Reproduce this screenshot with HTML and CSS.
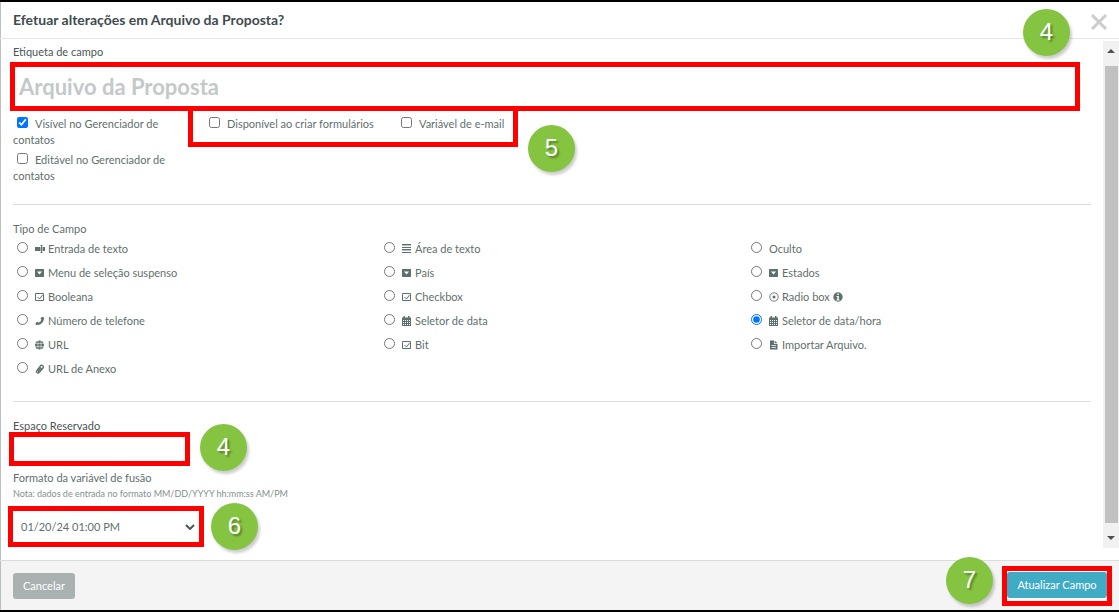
FILE: index.html
```html
<!DOCTYPE html>
<html lang="pt-BR">
<head>
<meta charset="utf-8">
<title>Efetuar alterações</title>
<link rel="stylesheet" href="styles.css">
</head>
<body>
<svg class="sprite" aria-hidden="true">
  <symbol id="i-input" viewBox="0 0 10 10"><path d="M0 3h5v4H0zM6 3h1v4H6zM8 3h2v4H8zM6 1h1v8H6z"/><path d="M5 1h3v1H5zM5 8h3v1H5zM5 3h5v4H5z" opacity=".5"/></symbol>
  <symbol id="i-lines" viewBox="0 0 10 10"><path d="M0 0h9v1H0zM0 3h9v1H0zM0 5h9v1H0zM0 8h9v1H0z"/><path d="M0 1h9v1H0zM0 6h9v1H0z" opacity=".45"/></symbol>
  <symbol id="i-drop" viewBox="0 0 10 10"><path fill-rule="evenodd" d="M.5 1h8l.5.5v7l-.5.5h-8L0 8.500v-7zM2 3.500L4.500 6.500l2.500-3z"/></symbol>
  <symbol id="i-check" viewBox="0 0 10 10"><path d="M.5 1.500h8v7h-8zM2.500 5l2 2L7.500 3" fill="none" stroke="currentColor"/></symbol>
  <symbol id="i-cal" viewBox="0 0 10 10"><path fill-rule="evenodd" d="M1.500 0H3v1.500h3V0h1.500v1.500H9V10H0V1.500h1.500zM1 4v1h1V4zm2 0v1h1V4zM5 4v1h1V4zm2 0v1h1V4zM1 6v1h1V6zm2 0v1h1V6zM5 6v1h1V6zm2 0v1h1V6zM1 8v1h1V8zm2 0v1h1V8zM5 8v1h1V8zm2 0v1h1V8z"/></symbol>
  <symbol id="i-radio" viewBox="0 0 10 10"><circle cx="5" cy="5" r="4.200" fill="none" stroke="currentColor" stroke-width=".9"/><circle cx="5" cy="5" r="1.500"/></symbol>
  <symbol id="i-info" viewBox="0 0 10 10"><path fill-rule="evenodd" d="M5 .3a4.700 4.700 0 1 1 0 9.400A4.700 4.700 0 0 1 5 .3zM4.300 1.500V3h1.500V1.500zM3.500 4v1h.8v2.500h-.8v1h3v-1h-.7V4z"/></symbol>
  <symbol id="i-phone" viewBox="0 0 10 10"><path d="M7 .8l2 .7C9.300 5.500 6 9.500 1 9L.5 7l2-1.300 1.200 1C5.300 6 6 5 6.300 3.500l-.9-1z"/></symbol>
  <symbol id="i-globe" viewBox="0 0 10 10"><circle cx="4.500" cy="5" r="4.500"/><path d="M0 3.500h9M0 6.500h9M3 0v10M6 0v10" stroke="#fff" stroke-width=".5"/></symbol>
  <symbol id="i-clip" viewBox="0 0 10 10"><path d="M7.500 4L4.500 8C3 10 .5 8.500 1.800 6.500L5 2.300C6.500.2 9.300 1.800 8 4L5 7.500C4 8.500 2.800 7.500 3.600 6.500L6 3.500" fill="none" stroke="currentColor" stroke-width="1.300"/></symbol>
  <symbol id="i-file" viewBox="0 0 10 10"><path fill-rule="evenodd" d="M1 .5h4V4h3.500v5.500H1zM2.500 5v.7H7V5zm0 2v.7H7V7z"/><path d="M5.700.5l2.800 2.800H5.700z"/></symbol>
</svg>
<div class="dialog" role="dialog" aria-labelledby="title">
  <header class="header">
    <h1 id="title">Efetuar alterações em Arquivo da Proposta?</h1>
    <button class="close" type="button" aria-label="Fechar"><svg viewBox="0 0 18 18"><path d="M2 2l14 14M16 2L2 16"/></svg></button>
    <span class="step step-close">4</span>
  </header>
  <div class="body">
    <main class="content">
      <label class="caption" for="name">Etiqueta de campo</label>
      <div class="highlight name-box"><input id="name" type="text" value="Arquivo da Proposta"></div>
      <div class="flags">
        <div class="flag-col">
          <label><input type="checkbox" checked>Visível no Gerenciador de contatos</label>
          <label><input type="checkbox">Editável no Gerenciador de contatos</label>
        </div>
        <div class="highlight flag-box">
          <label><input type="checkbox">Disponível ao criar formulários</label>
          <label><input type="checkbox">Variável de e-mail</label>
          <span class="step step-flags">5</span>
        </div>
      </div>
      <hr>
      <fieldset>
        <legend>Tipo de Campo</legend>
        <div class="types">
          <label><input type="radio" name="type"><svg><use href="#i-input"/></svg>Entrada de texto</label>
          <label><input type="radio" name="type"><svg><use href="#i-lines"/></svg>Área de texto</label>
          <label><input type="radio" name="type">Oculto</label>
          <label><input type="radio" name="type"><svg><use href="#i-drop"/></svg>Menu de seleção suspenso</label>
          <label><input type="radio" name="type"><svg><use href="#i-drop"/></svg>País</label>
          <label><input type="radio" name="type"><svg><use href="#i-drop"/></svg>Estados</label>
          <label><input type="radio" name="type"><svg><use href="#i-check"/></svg>Booleana</label>
          <label><input type="radio" name="type"><svg><use href="#i-check"/></svg>Checkbox</label>
          <label><input type="radio" name="type"><svg><use href="#i-radio"/></svg>Radio box<svg class="info"><use href="#i-info"/></svg></label>
          <label><input type="radio" name="type"><svg><use href="#i-phone"/></svg>Número de telefone</label>
          <label><input type="radio" name="type"><svg><use href="#i-cal"/></svg>Seletor de data</label>
          <label><input type="radio" name="type" checked><svg><use href="#i-cal"/></svg>Seletor de data/hora</label>
          <label><input type="radio" name="type"><svg><use href="#i-globe"/></svg>URL</label>
          <label><input type="radio" name="type"><svg><use href="#i-check"/></svg>Bit</label>
          <label><input type="radio" name="type"><svg><use href="#i-file"/></svg>Importar Arquivo.</label>
          <label><input type="radio" name="type"><svg><use href="#i-clip"/></svg>URL de Anexo</label>
        </div>
      </fieldset>
      <hr>
      <label class="caption" for="placeholder">Espaço Reservado</label>
      <div class="highlight placeholder-box"><input id="placeholder" type="text"><span class="step step-placeholder">4</span></div>
      <label class="caption muted" for="format">Formato da variável de fusão</label>
      <p class="note">Nota: dados de entrada no formato MM/DD/YYYY hh:mm:ss AM/PM</p>
      <div class="highlight format-box">
        <select id="format"><option>01/20/24 01:00 PM</option></select>
        <svg class="chevron" viewBox="0 0 10 6"><path d="M1 1l4 4 4-4"/></svg>
        <span class="step step-format">6</span>
      </div>
    </main>
    <div class="scrollbar" aria-hidden="true">
      <svg viewBox="0 0 8 4"><path d="M0 4l4-4 4 4z"/></svg>
      <div class="thumb"></div>
      <svg viewBox="0 0 8 4"><path d="M0 0l4 4 4-4z"/></svg>
    </div>
  </div>
  <footer class="footer">
    <button class="btn" type="button">Cancelar</button>
    <div class="highlight submit-box"><button class="btn primary" type="button">Atualizar Campo</button><span class="step step-submit">7</span></div>
  </footer>
</div>
</body>
</html>
```

FILE: styles.css
```css
* { box-sizing: border-box; }

body {
  margin: 0;
  background: #fff;
  color: #5f6f6d;
  font: 11px/16px Lato, sans-serif;
}

input, select, button { font: inherit; color: inherit; }

.sprite { position: absolute; width: 0; height: 0; }

.dialog {
  display: flex;
  flex-direction: column;
  min-height: 100vh;
  border: solid #000;
  border-width: 2px 0;
  box-shadow: inset 1px 0 #b9c0bf;
}

.header {
  position: relative;
  display: flex;
  align-items: center;
  justify-content: space-between;
  height: 37px;
  padding: 0 10px 0 13px;
  border-bottom: 1px solid #e6e8e8;
}

h1 { margin: 0; color: #404b4f; font-size: 14px; font-weight: 700; }

.close { width: 20px; height: 20px; margin-top: 4px; padding: 1px; border: 0; background: none; }
.close svg { display: block; width: 18px; height: 18px; }
.close path { fill: none; stroke: #ccc; stroke-width: 3; }

.body { display: flex; flex: 1; }
.content { flex: 1; padding: 5px 12px 13px 13px; }

.caption { display: block; color: #4b5655; }
.muted { color: #5f6f6d; }

.highlight { position: relative; border: 5px solid #f00; background: #fff; }
.highlight > input, .highlight > select {
  display: block;
  width: 100%;
  height: 100%;
  border: 0;
  outline: 0;
  background: none;
}

.name-box { height: 49px; margin: 2px 11px 0 -3px; }
.name-box input { padding: 0 4px; color: #c3c9c8; font-size: 22px; font-weight: 700; }

.flags { display: flex; align-items: flex-start; }
.flag-col { display: flex; flex-direction: column; gap: 4px; width: 175px; padding: 5px 10px 0 0; }
.flags input { width: 11px; height: 11px; margin: 0 7px 0 4px; vertical-align: 0; }
.flag-box { display: flex; width: 330px; height: 41px; margin-top: -5px; padding: 5px 0 0 12px; }
.flag-box label { flex: none; width: 192px; }
.flag-box label + label { width: auto; }

hr { height: 1px; margin: 20px 0 16px; border: 0; background: #d9dddd; }

fieldset { margin: 0; padding: 0; border: 0; }
legend { padding: 0; }

.types { display: grid; grid-template-columns: repeat(3, 1fr); column-gap: 23px; }
.types label { display: flex; align-items: center; height: 24px; }
.types input { width: 11px; height: 11px; margin: 0 7px 4px 4px; }
.types svg { width: 10px; height: 10px; margin-right: 3px; fill: currentColor; }
.types .info { margin: 0 0 0 3px; }

.placeholder-box { width: 181px; height: 34px; margin: -2px 0 4px -4px; }

.note { margin: 0 0 4px; color: #84908e; font-size: 9px; }

.format-box { width: 196px; height: 41px; margin-left: -5px; }
.format-box select { padding: 0 8px; appearance: none; }
.chevron { position: absolute; right: 4px; top: 13px; width: 10px; height: 6px; }
.chevron path { fill: none; stroke: #4b5655; stroke-width: 2; }

.scrollbar {
  display: flex;
  flex-direction: column;
  align-items: center;
  gap: 13px;
  width: 16px;
  margin: 2px 0 12px;
  padding: 8px 0;
  background: #f1f1f1;
}
.scrollbar svg { width: 8px; height: 4px; fill: #505050; }
.thumb { flex: 1; width: 13px; background: #c1c1c1; }

.footer {
  display: flex;
  align-items: center;
  justify-content: space-between;
  height: 50px;
  padding: 0 7px 0 13px;
  border-top: 1px solid #d9dddd;
  background: #f4f4f4;
  box-shadow: inset 1px 0 #b9c0bf;
}

.btn {
  height: 26px;
  padding: 0 10px;
  border: 0;
  border-radius: 3px;
  background: #a9b2b1;
  color: #fff;
}
.primary { display: block; width: 100%; padding: 0; background: #3fabc4; }
.submit-box { width: 110px; height: 40px; padding-top: 1px; }

/* Numbered callouts lie over the form. */
.step {
  position: absolute;
  z-index: 1;
  width: 47px;
  height: 47px;
  border-radius: 50%;
  background: #84c441;
  box-shadow: 2px 3px 3px rgba(0, 0, 0, .2);
  color: #fff;
  font: 24px/46px "Liberation Sans", Arial, sans-serif;
  text-align: center;
  text-shadow: 2px 2px 2px rgba(0, 0, 0, .35);
}
.step-close { right: 49px; top: 7px; }
.step-flags { right: -62px; top: 14px; }
.step-placeholder { right: -62px; top: -13px; }
.step-format { right: -59px; top: -8px; }
.step-submit { left: -61px; top: -14px; }
```
